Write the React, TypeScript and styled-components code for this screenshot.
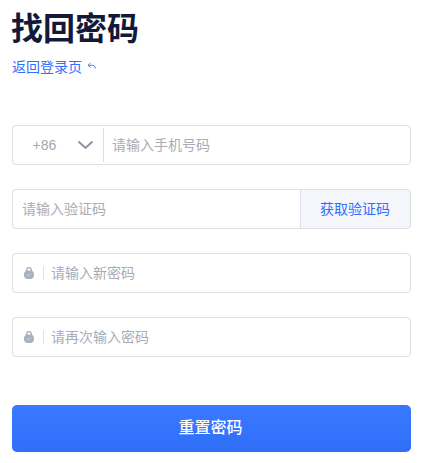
import React from "react";
import styled, { createGlobalStyle } from "styled-components";

const Global = createGlobalStyle`
  html, body { margin: 0; padding: 0; background: #fff; }
  body { font-family: "Liberation Sans", "Noto Sans CJK SC", sans-serif; }
`;

const Page = styled.div`
  width: 399px;
  padding: 0 12px;
  display: flex;
  flex-direction: column;
`;

const Title = styled.h1`
  margin: 6px 0 0 -1px;
  font-size: 32px;
  line-height: 40px;
  font-weight: 700;
  color: #14193a;
  font-family: "Noto Sans CJK SC", sans-serif;
`;

const BackLink = styled.a`
  margin-top: 10px;
  display: flex;
  align-items: center;
  gap: 5px;
  height: 20px;
  font-size: 14px;
  color: #2f6fff;
  font-family: "Noto Sans CJK SC", sans-serif;
`;

const Form = styled.div`
  margin-top: 49px;
  display: flex;
  flex-direction: column;
  gap: 24px;
`;

const Field = styled.div`
  height: 40px;
  box-sizing: border-box;
  border: 1px solid #dcdfe6;
  border-radius: 4px;
  display: flex;
  align-items: center;
  overflow: hidden;
`;

const Prefix = styled.div`
  width: 91px;
  height: 34px;
  box-sizing: border-box;
  padding: 0 8px 0 19.5px;
  border-right: 1px solid #dcdfe6;
  display: flex;
  align-items: center;
  justify-content: space-between;
  font-size: 14px;
  color: #a3a8b4;
`;

const Placeholder = styled.span<{ $left: number }>`
  padding-left: ${(p) => p.$left}px;
  flex: 1;
  font-size: 14px;
  line-height: 36px;
  margin-top: -2px;
  color: #a8acb6;
  font-family: "Noto Sans CJK SC", sans-serif;
`;

const LockSlot = styled.div`
  width: 31px;
  height: 14px;
  box-sizing: border-box;
  padding-left: 11px;
  border-right: 1px solid #dfe2e8;
  display: flex;
  align-items: center;
`;

const CodeRow = styled.div`
  display: flex;
  height: 40px;
`;

const CodeInput = styled(Field)`
  flex: 1;
  border-radius: 4px 0 0 4px;
`;

const CodeButton = styled.div`
  width: 111px;
  box-sizing: border-box;
  border: 1px solid #dcdfe6;
  margin-left: -1px;
  padding: 0 1px 2px 0;
  border-radius: 0 4px 4px 0;
  background: #f5f6fb;
  color: #2f6fff;
  font-size: 14px;
  font-family: "Noto Sans CJK SC", sans-serif;
  display: flex;
  align-items: center;
  justify-content: center;
`;

const Submit = styled.button`
  margin-top: 48px;
  height: 47px;
  padding: 0 2px 5px 0;
  border: none;
  border-radius: 5px;
  background: linear-gradient(180deg, #3a78ff, #2f6ff8);
  color: #fff;
  font-size: 16px;
  font-weight: 500;
  font-family: "Noto Sans CJK SC", sans-serif;
`;

const Lock = () => (
  <svg width="10" height="12" viewBox="0 0 10 12">
    <path d="M2.6 5V3a2.4 2.4 0 0 1 4.8 0V5" fill="none" stroke="#a9b0c2" strokeWidth="1.4" />
    <rect x="0" y="3.6" width="10" height="8.4" rx="4" fill="#a9b0c2" />
    <path d="M3.4 7.6l1.2 1.1 2-2" fill="none" stroke="#dfe2ea" strokeWidth="0.8" />
  </svg>
);

const Chevron = () => (
  <svg width="18" height="10" viewBox="0 0 18 10">
    <path d="M1.5 1.5L8.5 8l7-6.5" fill="none" stroke="#8f94a0" strokeWidth="2" />
  </svg>
);

const BackIcon = () => (
  <svg width="9" height="8" viewBox="0 0 9 8">
    <path d="M3.5 1L1 3.3l2.5 2.2M1.2 3.3H5.5c1.8 0 2.8 1.2 2.8 3.2" fill="none" stroke="#4d7fe8" strokeWidth="1" />
  </svg>
);

export default function App() {
  return (
    <Page>
      <Global />
      <Title>找回密码</Title>
      <BackLink>返回登录页<BackIcon /></BackLink>
      <Form>
        <Field>
          <Prefix>+86<Chevron /></Prefix>
          <Placeholder $left={8}>请输入手机号码</Placeholder>
        </Field>
        <CodeRow>
          <CodeInput><Placeholder $left={9}>请输入验证码</Placeholder></CodeInput>
          <CodeButton>获取验证码</CodeButton>
        </CodeRow>
        <Field>
          <LockSlot><Lock /></LockSlot>
          <Placeholder $left={7}>请输入新密码</Placeholder>
        </Field>
        <Field>
          <LockSlot><Lock /></LockSlot>
          <Placeholder $left={7}>请再次输入密码</Placeholder>
        </Field>
      </Form>
      <Submit>重置密码</Submit>
    </Page>
  );
}
